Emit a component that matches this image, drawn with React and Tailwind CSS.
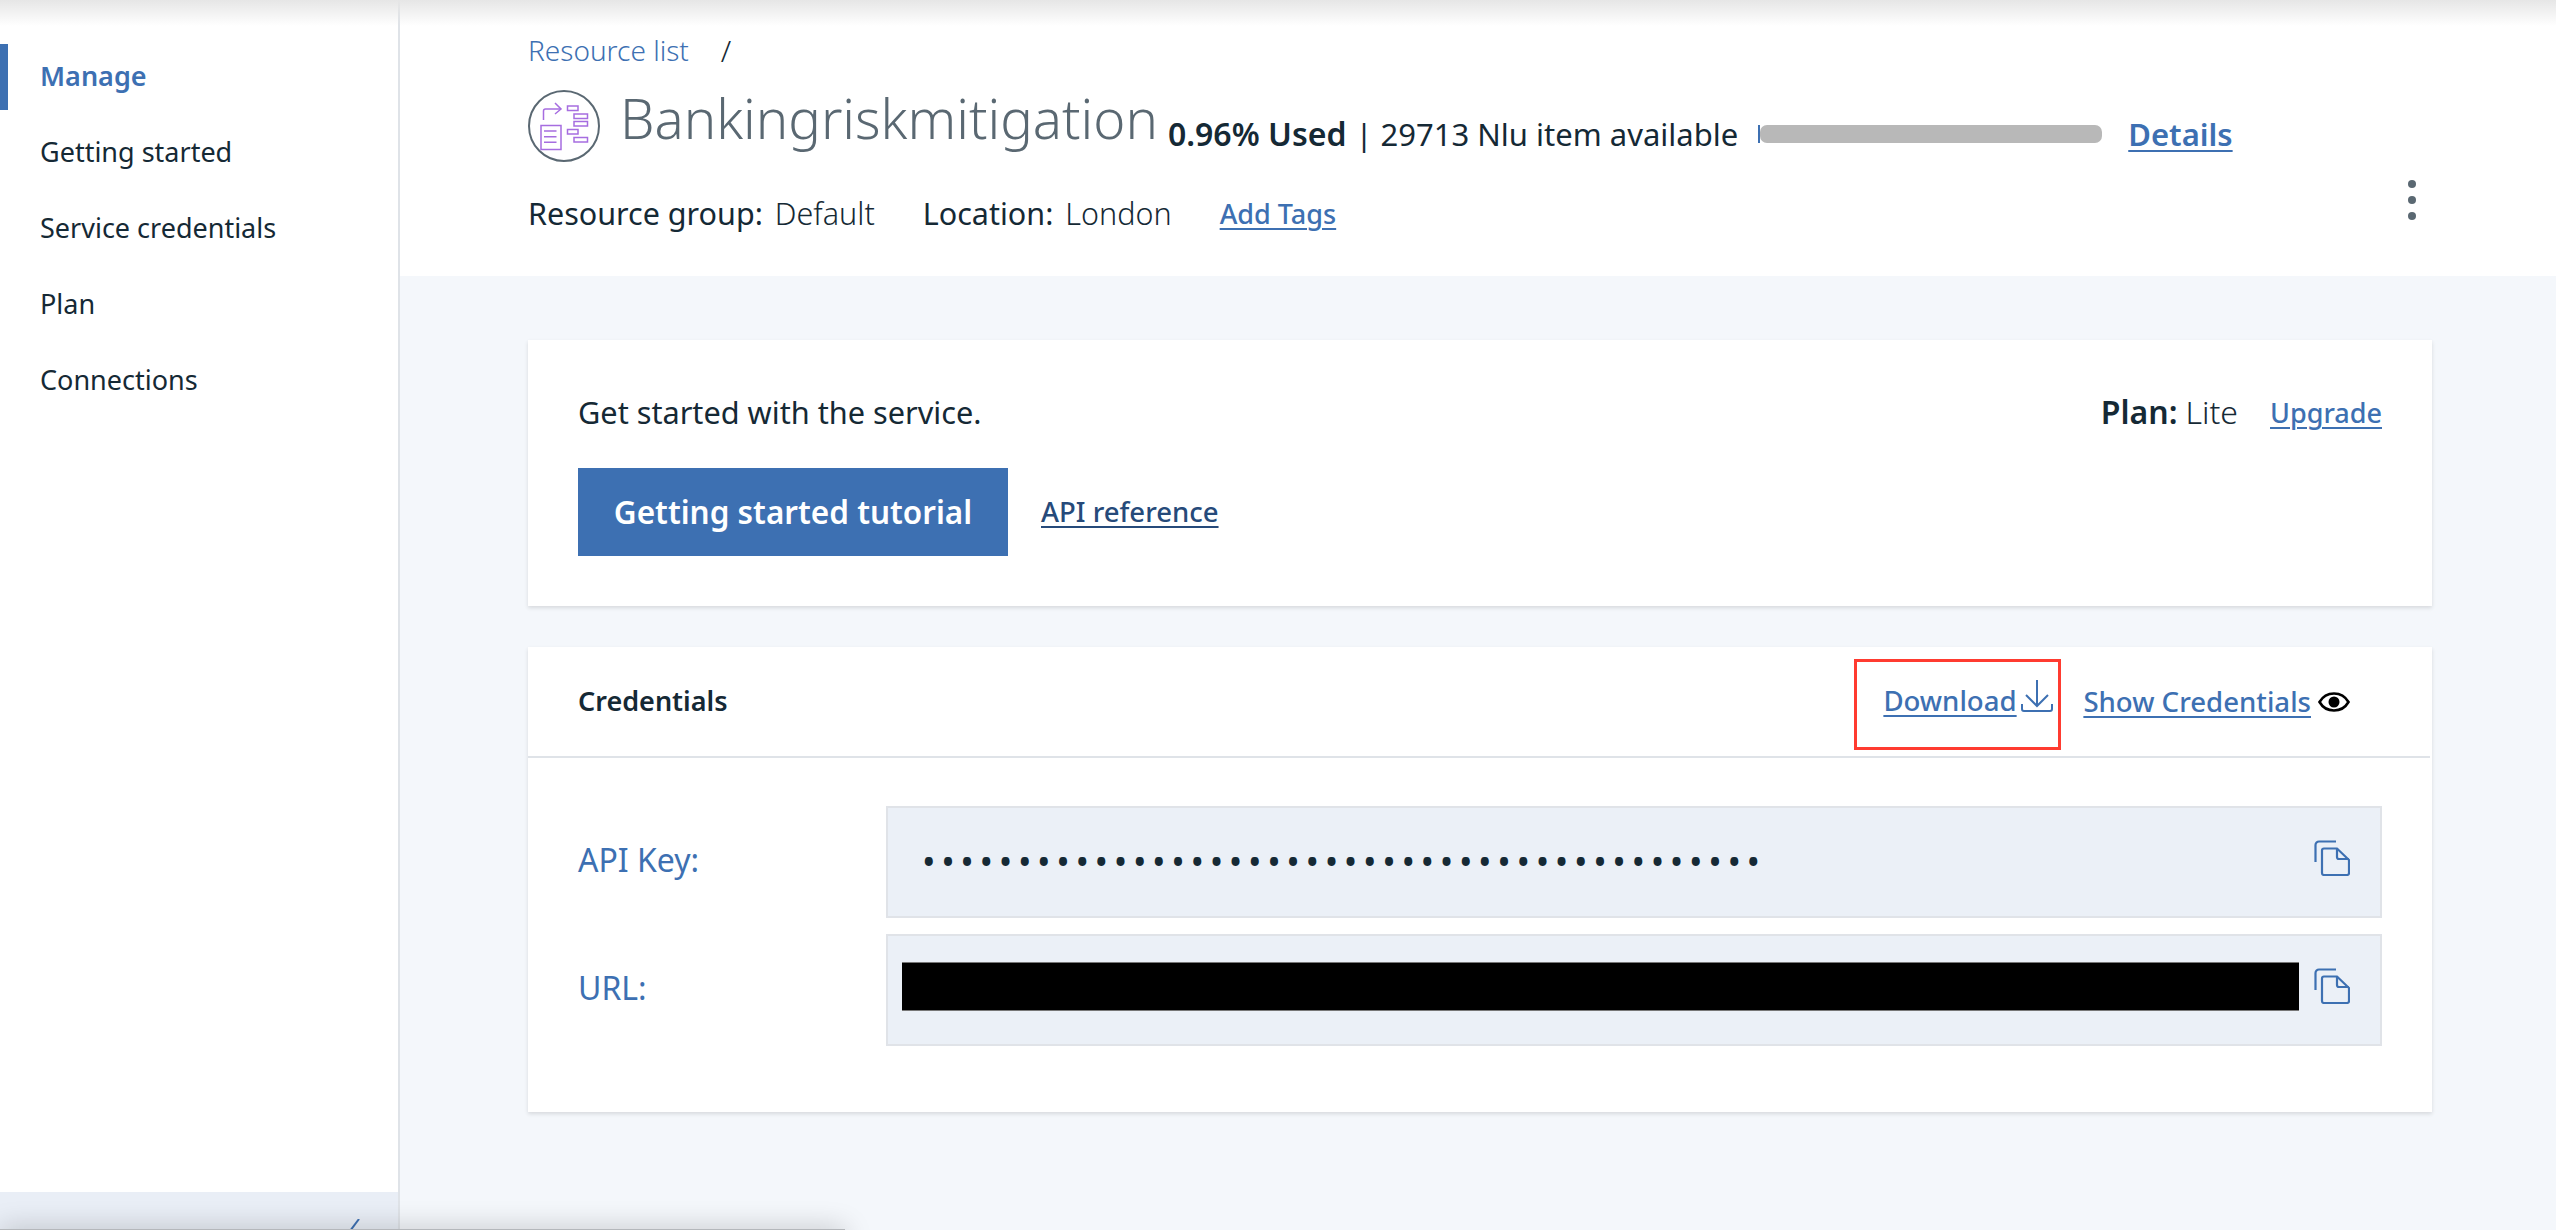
import React from "react";

const navItems = ["Manage", "Getting started", "Service credentials", "Plan", "Connections"];

const CopyIcon = () => (
  <svg width="36" height="36" viewBox="0 0 36 36" fill="none" stroke="#3d70b2" strokeWidth="2.2" className="shrink-0 mb-[8px]">
    <path d="M1.5 22V5A3.5 3.5 0 0 1 5 1.500h17" />
    <path d="M10 8.500h13L35 20v13a2 2 0 0 1-2 2H10a2 2 0 0 1-2-2V10.500a2 2 0 0 1 2-2z" />
    <path d="M23 8.500V17a2 2 0 0 0 2 2h10" />
  </svg>
);

const DownloadIcon = () => (
  <svg width="32" height="32" viewBox="0 0 32 32" fill="none" stroke="#3d70b2" strokeWidth="2" className="shrink-0 mb-[10px]">
    <path d="M16 0v26" />
    <path d="M5 15l11 11 11-11" />
    <path d="M1 24v5a2 2 0 0 0 2 2h26a2 2 0 0 0 2-2v-5" />
  </svg>
);

const EyeIcon = () => (
  <svg width="32" height="20" viewBox="0 0 32 20" className="block shrink-0">
    <path d="M1.500 10C5 4 10 1.500 16 1.500S27 4 30.500 10C27 16 22 18.500 16 18.500S5 16 1.500 10z" fill="none" stroke="#000" strokeWidth="2.6" />
    <circle cx="16" cy="10" r="5.500" fill="#000" />
  </svg>
);

const ServiceLogo = () => (
  <svg width="72" height="72" viewBox="0 0 72 72" fill="none" className="shrink-0">
    <circle cx="36" cy="36" r="35" fill="#fff" stroke="#5a6872" strokeWidth="2" />
    <g stroke="#a66de0" strokeWidth="1.500">
      <path d="M15.500 30V21a2 2 0 0 1 2-2H33" />
      <path d="M27 13l6 6-6 5" />
      <rect x="39.500" y="16" width="10.500" height="4.500" />
      <rect x="46" y="24" width="13.500" height="4.500" />
      <rect x="46" y="31.500" width="13.500" height="4.500" />
      <rect x="39.500" y="39.500" width="10.500" height="4.500" />
      <rect x="46" y="47.500" width="13.500" height="4.500" />
      <rect x="13" y="35.500" width="20" height="24" />
      <path d="M16 41h12.500M16 46.700h12.500M16 52.300h12.500" />
    </g>
  </svg>
);

const TextLink = ({ children, className = "" }) => (
  <a className={`underline decoration-2 underline-offset-4 font-medium ${className}`}>{children}</a>
);

const Sidebar = () => (
  <aside className="w-[400px] shrink-0 border-r-2 border-[#dfe3e8] bg-white flex flex-col justify-between">
    <nav className="pt-[38px] flex flex-col">
      {navItems.map((item, i) => (
        <div
          key={item}
          className={`h-[76px] flex items-center pl-[40px] text-[27px] ${
            i === 0 ? "font-semibold text-[#3d70b2] relative" : "text-[#152935]"
          }`}
        >
          {i === 0 && <span className="absolute left-0 top-[6px] bottom-[4px] w-[8px] bg-[#3d70b2]" />}
          {item}
        </div>
      ))}
    </nav>
    <div className="h-[38px] bg-[#e9eef6] relative overflow-hidden">
      <svg width="12" height="12" viewBox="0 0 12 12" className="absolute left-[349px] top-[27px]">
        <path d="M1 12L10 0" stroke="#3d70b2" strokeWidth="2" fill="none" />
      </svg>
    </div>
  </aside>
);

const Header = () => (
  <header className="h-[276px] shrink-0 bg-white pl-[128px] pr-[124px] pt-[32px] flex flex-col">
    <div className="h-[36px] flex items-center text-[28px] text-[#3d70b2] font-light">
      Resource list
      <span className="ml-[32px] text-[30px] text-[#152935]">/</span>
    </div>
    <div className="mt-[22px] h-[72px] flex items-center">
      <ServiceLogo />
      <h1 className="ml-[20px] mt-[-15px] text-[54.500px] leading-none font-light text-[#5a6872]">Bankingriskmitigation</h1>
      <div className="ml-[10px] mt-[16px] flex items-center text-[31px] text-[#152935]">
        <span className="text-[32px] font-semibold">0.96% Used</span>
        <span className="ml-[9px]">| 29713 Nlu item available</span>
        <div className="ml-[20px] flex items-center">
          <span className="w-[2px] h-[18px] bg-[#3d70b2]" />
          <div className="w-[342px] h-[18px] rounded-[7px] bg-[#b8b8b8]" />
        </div>
        <TextLink className="ml-[26px] font-semibold text-[#3d70b2]">Details</TextLink>
      </div>
    </div>
    <div className="mt-[18px] flex items-center text-[30.500px] text-[#152935]">
      <span>Resource group:</span>
      <span className="ml-[12px] font-light">Default</span>
      <span className="ml-[48px]">Location:</span>
      <span className="ml-[12px] font-light">London</span>
      <TextLink className="ml-[48px] text-[27px] text-[#3d70b2]">Add Tags</TextLink>
      <div className="ml-auto mr-[16px] mb-[28px] flex flex-col gap-[8px]">
        <span className="w-[8px] h-[8px] rounded-full bg-[#5a6872]" />
        <span className="w-[8px] h-[8px] rounded-full bg-[#5a6872]" />
        <span className="w-[8px] h-[8px] rounded-full bg-[#5a6872]" />
      </div>
    </div>
  </header>
);

const StartCard = () => (
  <section className="h-[266px] bg-white shadow-[0_2px_4px_rgba(0,0,0,0.12)] pl-[50px] pr-[50px] pt-[52px]">
    <div className="flex items-center justify-between h-[40px] text-[30.700px] text-[#152935]">
      <span>Get started with the service.</span>
      <div className="flex items-center">
        <span className="text-[32px] font-semibold">Plan:</span>
        <span className="ml-[8px] text-[32px] font-light">Lite</span>
        <TextLink className="ml-[32px] mt-[2px] text-[27px] text-[#3d70b2]">Upgrade</TextLink>
      </div>
    </div>
    <div className="mt-[36px] flex items-center">
      <button className="w-[430px] h-[88px] bg-[#3d70b2] text-white text-[31.500px] font-semibold">Getting started tutorial</button>
      <TextLink className="ml-[33px] text-[27.500px] text-[#264a7a]">API reference</TextLink>
    </div>
  </section>
);

const Field = ({ label, children }) => (
  <div className="flex items-center">
    <span className="w-[358px] pl-[50px] mb-[4px] text-[32px] text-[#3d70b2]">{label}</span>
    <div className="w-[1496px] h-[112px] bg-[#ebf0f7] border-2 border-[#e0e3e8] flex items-center pr-[30px]">{children}</div>
  </div>
);

const CredentialsCard = () => (
  <section className="h-[465px] bg-white shadow-[0_2px_4px_rgba(0,0,0,0.12)]">
    <div className="h-[111px] mr-[2px] border-b-2 border-[#dfe3e8] flex items-center pl-[50px] pr-[80px]">
      <span className="text-[27px] font-semibold text-[#152935]">Credentials</span>
      <div className="ml-auto flex items-center text-[27.600px] text-[#3d70b2]">
        <div className="w-[207px] h-[91px] mt-[5px] border-[3px] border-[#ff3b30] flex items-center pl-[26px] pb-[6px] gap-[4px]">
          <TextLink>Download</TextLink>
          <DownloadIcon />
        </div>
        <TextLink className="ml-[22px]">Show Credentials</TextLink>
        <span className="ml-[7px]"><EyeIcon /></span>
      </div>
    </div>
    <div className="pt-[48px] flex flex-col gap-[16px]">
      <Field label="API Key:">
        <span className="ml-[34px] text-[36px] tracking-[5.640px] text-[#152935] leading-none">
          {"•".repeat(44)}
        </span>
        <span className="ml-auto flex"><CopyIcon /></span>
      </Field>
      <Field label="URL:">
        <div className="ml-[14px] mb-[7px] w-[1397px] h-[49px] bg-black border-y border-[#777]" />
        <span className="ml-auto flex"><CopyIcon /></span>
      </Field>
    </div>
  </section>
);

export default function App() {
  return (
    <div className="relative w-[2556px] h-[1230px] overflow-hidden flex bg-[#f4f7fb] font-['Noto_Sans',sans-serif]">
      <Sidebar />
      <main className="flex-1 flex flex-col">
        <Header />
        <div className="pl-[128px] pr-[124px] pt-[64px] flex flex-col gap-[41px]">
          <StartCard />
          <CredentialsCard />
        </div>
      </main>
      {/* browser chrome shadows bleeding in from the capture */}
      <div className="absolute left-0 right-0 top-0 h-[26px] bg-gradient-to-b from-[#e6e6e6] to-transparent" />
      <div className="absolute left-0 top-[1229px] w-[845px] h-[20px] bg-[#b4b7bb] shadow-[0_0_28px_rgba(0,0,0,0.22)]" />
    </div>
  );
}
